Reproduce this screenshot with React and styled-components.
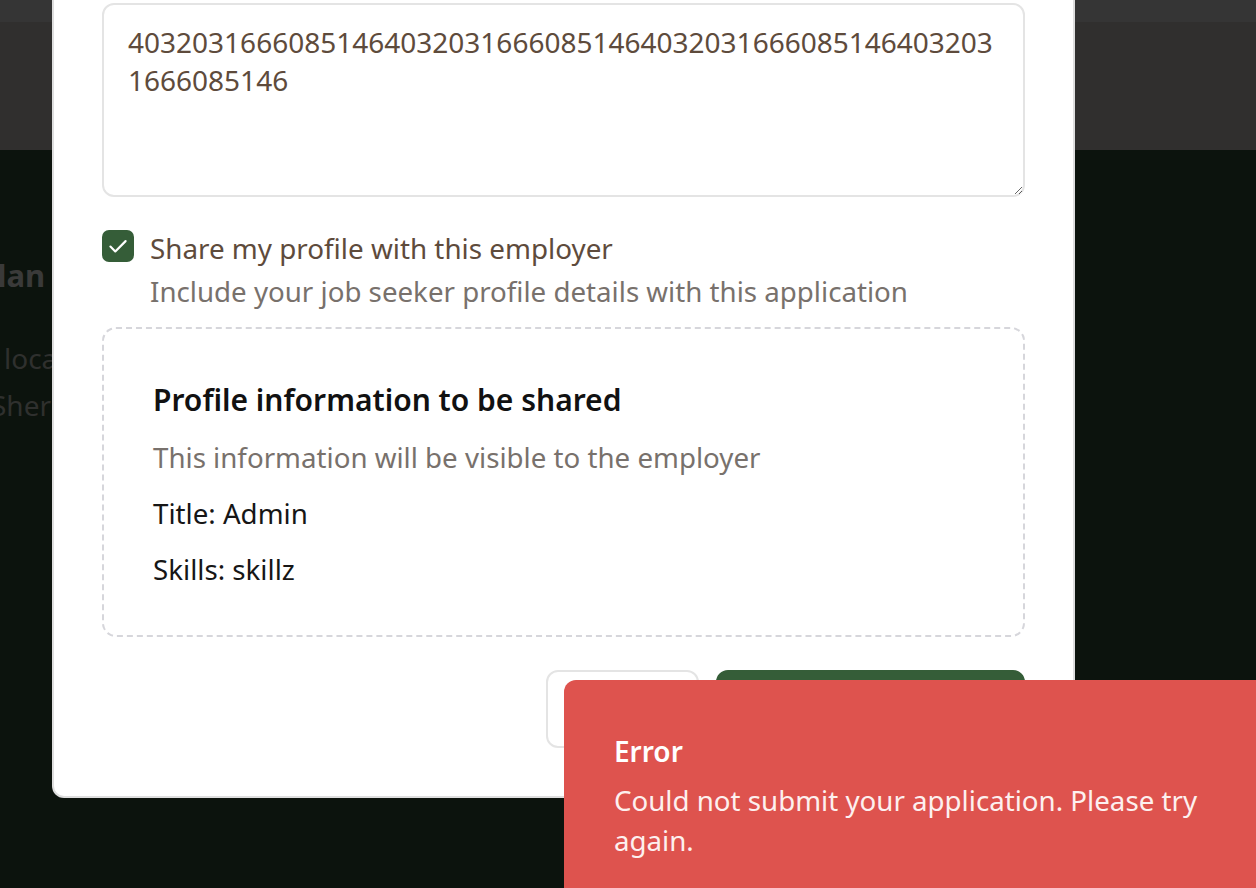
import styled, { createGlobalStyle } from "styled-components";

const GlobalStyle = createGlobalStyle`
  html, body {
    margin: 0;
    padding: 0;
    height: 100%;
    overflow: hidden;
  }
  body {
    font-family: "Noto Sans", "Open Sans", sans-serif;
    background: #0c130d;
  }
  * {
    box-sizing: border-box;
  }
`;

const Page = styled.div`
  min-height: 888px;
  background: #0c130d;
`;

const TopStrip = styled.div`
  height: 22px;
  background: #353535;
`;

const HeaderBand = styled.div`
  height: 128px;
  background: #302f2e;
`;

const Hero = styled.div`
  padding-top: 100px;
  display: flex;
  flex-direction: column;
  width: 52px;
  overflow: hidden;
`;

const HeroLine = styled.div`
  white-space: nowrap;
  margin-left: ${(p) => p.$shift}px;
  font-size: ${(p) => (p.$heading ? 31 : 28)}px;
  font-weight: ${(p) => (p.$heading ? 700 : 400)};
  line-height: ${(p) => (p.$heading ? 50 : 47)}px;
  color: ${(p) => (p.$heading ? "#3a3a39" : "#2f302e")};
  margin-bottom: ${(p) => p.$after || 0}px;
`;

const Overlay = styled.div`
  position: fixed;
  inset: 0;
  display: flex;
  align-items: flex-end;
  padding: 0 0 90px 52px;
`;

const Modal = styled.div`
  width: 1023px;
  background: #fff;
  border: 2px solid #dedede;
  border-top: none;
  border-radius: 0 0 12px 12px;
  padding: 40px 48px 48px;
  display: flex;
  flex-direction: column;
`;

const ModalTitle = styled.h2`
  margin: 0 0 30px;
  font-size: 34px;
  font-weight: 600;
  color: #111;
`;

const FieldLabel = styled.label`
  font-size: 26px;
  color: #5e4b3c;
  margin-bottom: 14px;
`;

const CoverLetter = styled.textarea`
  width: 100%;
  height: 194px;
  border: 2px solid #e4e4e4;
  border-radius: 12px;
  padding: 18px 24px;
  font-family: "Noto Sans", sans-serif;
  font-size: 28px;
  line-height: 38px;
  color: #5e4b3c;
  resize: vertical;
  outline: none;
  display: block;
`;

const ShareRow = styled.label`
  display: flex;
  align-items: flex-start;
  gap: 16px;
  margin-top: 32px;
`;

const CheckBox = styled.span`
  flex: none;
  width: 32px;
  height: 32px;
  margin-top: 1px;
  border-radius: 7px;
  background: #355d38;
  display: flex;
  align-items: center;
  justify-content: center;
`;

const ShareText = styled.div`
  display: flex;
  flex-direction: column;
  gap: 5px;
`;

const ShareLabel = styled.span`
  font-size: 27.8px;
  line-height: 38px;
  color: #5e4b3c;
`;

const Hint = styled.span`
  font-size: 27.7px;
  line-height: 38px;
  color: #78716c;
`;

const ProfileBox = styled.div`
  margin-top: 17px;
  border: 2px dashed #d6d6db;
  border-radius: 14px;
  padding: 50px 49px 47px;
  display: flex;
  flex-direction: column;
  gap: 18px;
`;

const BoxTitle = styled.h3`
  margin: 0 0 -1px;
  font-size: 30px;
  line-height: 42px;
  font-weight: 600;
  color: #111;
`;

const BoxLine = styled.p`
  margin: 0;
  font-size: 27.7px;
  line-height: 38px;
  color: ${(p) => (p.$muted ? "#78716c" : "#161616")};
`;

const Actions = styled.div`
  margin-top: 33px;
  display: flex;
  justify-content: flex-end;
  gap: 17px;
`;

const Button = styled.button`
  height: 78px;
  width: ${(p) => p.$w}px;
  border-radius: 12px;
  font-family: "Noto Sans", sans-serif;
  font-size: 28px;
  font-weight: 600;
  border: 2px solid ${(p) => (p.$primary ? "#355d38" : "#e4e4e4")};
  background: ${(p) => (p.$primary ? "#355d38" : "#fff")};
  color: ${(p) => (p.$primary ? "#fff" : "#5e4b3c")};
`;

const Toast = styled.div`
  position: fixed;
  right: 0;
  bottom: -22px;
  width: 692px;
  background: #de534e;
  border-radius: 12px 0 0 0;
  padding: 50px 50px 50px;
  color: #fff;
`;

const ToastTitle = styled.div`
  font-size: 28px;
  line-height: 42px;
  font-weight: 600;
  margin-bottom: 8px;
`;

const ToastText = styled.div`
  font-size: 27.7px;
  line-height: 40px;
  color: #fdf0ef;
`;

const digits = "4032031666085146".repeat(4);

const CheckIcon = () => (
  <svg width="26" height="26" viewBox="0 0 24 24" fill="none">
    <path
      d="M5 12.5l4.5 4.5L19 7.5"
      stroke="#fff"
      strokeWidth="2"
      strokeLinecap="round"
      strokeLinejoin="round"
    />
  </svg>
);

export default function App() {
  return (
    <>
      <GlobalStyle />
      <Page>
        <TopStrip />
        <HeaderBand />
        <Hero>
          <HeroLine $heading $shift={-22} $after={35}>
            Plan
          </HeroLine>
          <HeroLine $shift={4}>local candidates</HeroLine>
          <HeroLine $shift={-9}>Sheridan, WY</HeroLine>
        </Hero>
      </Page>

      <Overlay>
        <Modal>
          <ModalTitle>Apply for this job</ModalTitle>
          <FieldLabel htmlFor="cover">Cover letter</FieldLabel>
          <CoverLetter id="cover" readOnly value={digits} />
          <ShareRow>
            <CheckBox>
              <CheckIcon />
            </CheckBox>
            <ShareText>
              <ShareLabel>Share my profile with this employer</ShareLabel>
              <Hint>Include your job seeker profile details with this application</Hint>
            </ShareText>
          </ShareRow>
          <ProfileBox>
            <BoxTitle>Profile information to be shared</BoxTitle>
            <BoxLine $muted>This information will be visible to the employer</BoxLine>
            <BoxLine>Title: Admin</BoxLine>
            <BoxLine>Skills: skillz</BoxLine>
          </ProfileBox>
          <Actions>
            <Button $w={153}>Cancel</Button>
            <Button $w={309} $primary>
              Submit application
            </Button>
          </Actions>
        </Modal>
      </Overlay>

      <Toast>
        <ToastTitle>Error</ToastTitle>
        <ToastText>Could not submit your application. Please try again.</ToastText>
      </Toast>
    </>
  );
}
